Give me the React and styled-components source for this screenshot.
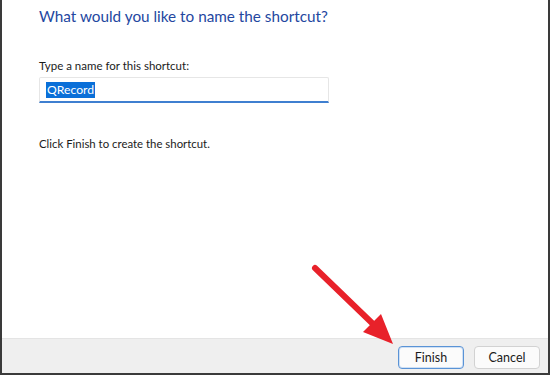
import React from "react"
import styled, { createGlobalStyle } from "styled-components"

const Global = createGlobalStyle`
  html, body {
    margin: 0;
    padding: 0;
    width: 550px;
    height: 375px;
    overflow: hidden;
    background: #ffffff;
  }
`

const Window = styled.div`
  position: relative;
  box-sizing: border-box;
  width: 550px;
  height: 375px;
  display: flex;
  flex-direction: column;
  background: #ffffff;
  border-left: 2px solid #3a3a3a;
  border-right: 2px solid #3a3a3a;
  border-bottom: 2px solid #3a3a3a;
  font-family: Lato, "Noto Sans", sans-serif;
`

const Content = styled.div`
  flex: 1;
  padding: 5px 0 0 37px;
`

const Title = styled.h1`
  margin: 0;
  font-size: 15.3px;
  font-weight: 400;
  color: #24479f;
  line-height: 22px;
`

const Label = styled.div`
  margin-top: 31px;
  font-size: 11.5px;
  line-height: 16px;
  color: #1b1b1b;
`

const Field = styled.div`
  box-sizing: border-box;
  width: 290px;
  height: 26px;
  margin-top: 3px;
  display: flex;
  align-items: center;
  padding-left: 6px;
  border: 1px solid #e6e6e6;
  border-bottom: 2px solid #3f7fd0;
  border-radius: 2px 2px 0 0;
`

const Selected = styled.span`
  background: #0a6fd8;
  color: #ffffff;
  font-size: 12.2px;
  line-height: 16px;
  padding: 0 1px;
`

const Note = styled.div`
  margin-top: 33px;
  font-size: 11.4px;
  line-height: 16px;
  color: #1b1b1b;
`

const Footer = styled.div`
  height: 34px;
  background: #efefef;
  border-top: 1px solid #e4e4e4;
  display: flex;
  align-items: center;
  justify-content: flex-end;
  gap: 10px;
  padding-right: 8px;
`

const Button = styled.button`
  box-sizing: border-box;
  width: 66px;
  height: 23px;
  margin-top: 2px;
  font-family: Lato, "Noto Sans", sans-serif;
  font-size: 12.5px;
  color: #1b1b1b;
  background: #fbfbfb;
  border: 1px solid ${({ primary }) => (primary ? "#5a93d6" : "#d2d2d2")};
  box-shadow: ${({ primary }) => (primary ? "inset 0 0 0 1px #cfe0f4" : "none")};
  border-radius: 4px;
  padding: 0;
`

const Arrow = styled.svg`
  position: absolute;
  left: 300px;
  top: 255px;
  pointer-events: none;
`

const App = () => (
  <>
    <Global />
    <Window>
      <Content>
        <Title>What would you like to name the shortcut?</Title>
        <Label>Type a name for this shortcut:</Label>
        <Field>
          <Selected>QRecord</Selected>
        </Field>
        <Note>Click Finish to create the shortcut.</Note>
      </Content>
      <Footer>
        <Button primary>Finish</Button>
        <Button>Cancel</Button>
      </Footer>
      <Arrow width="100" height="95" viewBox="0 0 100 95">
        <line x1="13" y1="13" x2="70" y2="68" stroke="#e8212a" strokeWidth="6" strokeLinecap="round" />
        <polygon points="91,89 61,77 79,59" fill="#e8212a" />
      </Arrow>
    </Window>
  </>
)

export default App
